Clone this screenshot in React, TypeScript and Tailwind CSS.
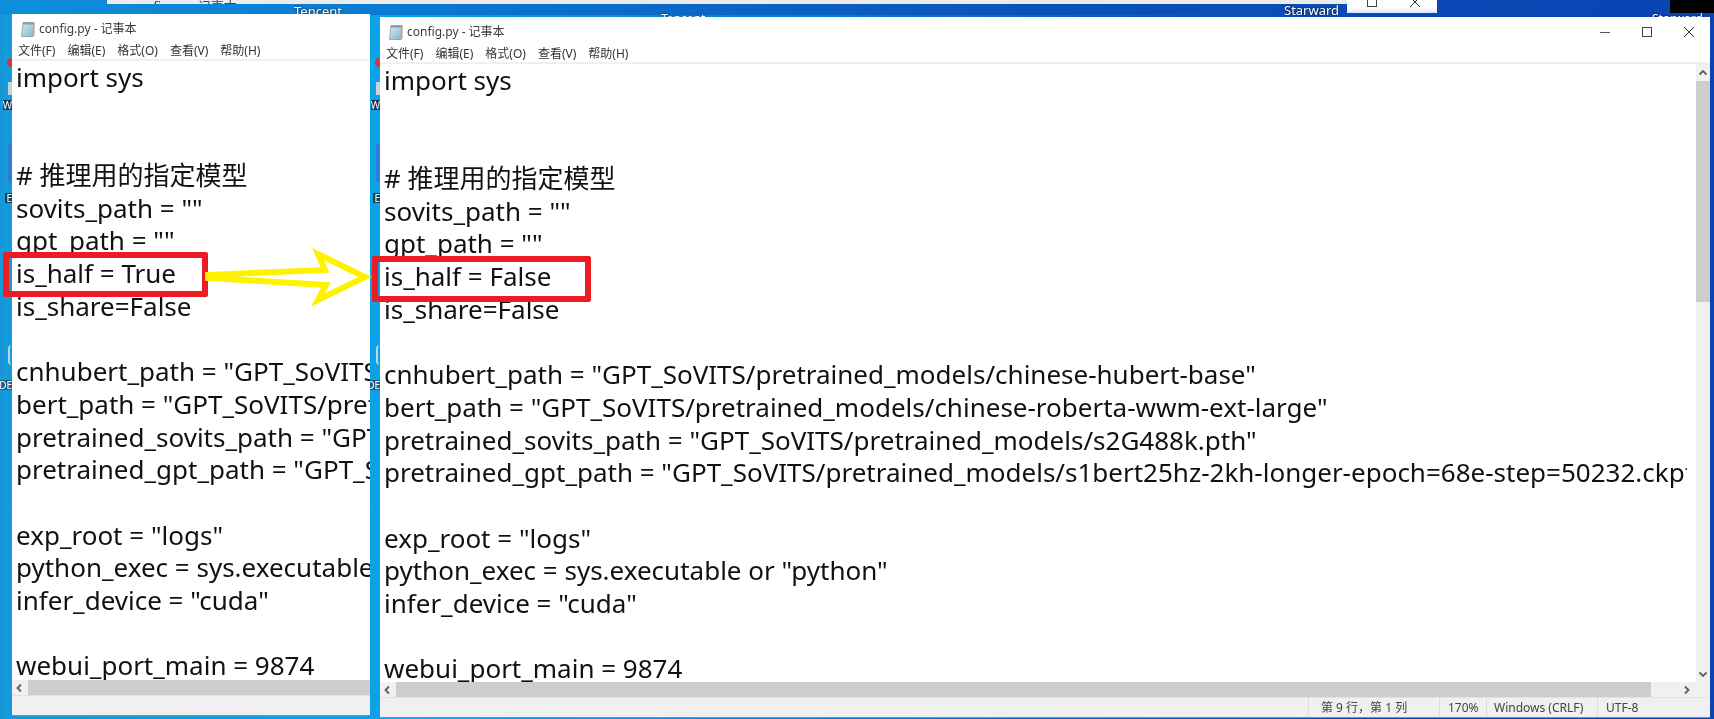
import React from "react";

const LINES = [
  "import sys",
  "",
  "",
  "# 推理用的指定模型",
  'sovits_path = ""',
  'gpt_path = ""',
  "",
  "is_share=False",
  "",
  'cnhubert_path = "GPT_SoVITS/pretrained_models/chinese-hubert-base"',
  'bert_path = "GPT_SoVITS/pretrained_models/chinese-roberta-wwm-ext-large"',
  'pretrained_sovits_path = "GPT_SoVITS/pretrained_models/s2G488k.pth"',
  'pretrained_gpt_path = "GPT_SoVITS/pretrained_models/s1bert25hz-2kh-longer-epoch=68e-step=50232.ckpt"',
  "",
  'exp_root = "logs"',
  'python_exec = sys.executable or "python"',
  'infer_device = "cuda"',
  "",
  "webui_port_main = 9874",
];

function Chevron({ dir }: { dir: "left" | "right" | "up" | "down" }) {
  const d = {
    left: "M6 1.5 L2.5 5 L6 8.5",
    right: "M4 1.5 L7.5 5 L4 8.5",
    up: "M1.5 6.5 L5 3 L8.5 6.5",
    down: "M1.5 3.5 L5 7 L8.5 3.5",
  }[dir];
  return (
    <svg width="10" height="10" viewBox="0 0 10 10" fill="none">
      <path d={d} stroke="#5f5f5f" strokeWidth="1.8" />
    </svg>
  );
}

function NotepadIcon() {
  return (
    <svg width="16" height="17" viewBox="0 0 16 17">
      <defs>
        <linearGradient id="np" x1="0" y1="0" x2="1" y2="1">
          <stop offset="0" stopColor="#d8eef4" />
          <stop offset="1" stopColor="#7fb6c8" />
        </linearGradient>
      </defs>
      <path d="M3 1.5 H14 L13 15.5 H1.5 Z" fill="url(#np)" stroke="#8c9a9c" strokeWidth="0.8" />
      <path d="M3 1.5 H14 L13.8 3.5 H2.8 Z" fill="#8f9b9e" />
      <path d="M14.2 2 V15 H13" fill="none" stroke="#c7a86a" strokeWidth="0.8" />
    </svg>
  );
}

function Notepad({
  className,
  full,
  half,
}: {
  className: string;
  full?: boolean;
  half: string;
}) {
  return (
    <div className={`absolute flex flex-col bg-white ${className}`}>
      <div className="flex h-[28px] items-center pl-[8px] pt-[2px]">
        <NotepadIcon />
        <span className="ml-[3px] text-[12px] text-[#3c3c3c]">config.py - 记事本</span>
        {full && (
          <div className="ml-auto flex items-center gap-[32px] pr-[16px]">
            <span className="h-[1px] w-[10px] bg-[#555]" />
            <span className="h-[10px] w-[10px] border border-[#444]" />
            <svg width="10" height="10" viewBox="0 0 10 10">
              <path d="M0 0 L10 10 M10 0 L0 10" stroke="#333" strokeWidth="1" />
            </svg>
          </div>
        )}
      </div>
      <div className="flex h-[19px] items-center gap-[12px] border-b-2 border-[#f0f0f0] pl-[6px] text-[12px] text-[#333]">
        <span>文件(F)</span>
        <span>编辑(E)</span>
        <span>格式(O)</span>
        <span>查看(V)</span>
        <span>帮助(H)</span>
      </div>
      <div className="flex min-h-0 flex-1">
        <div className={`min-w-0 flex-1 pl-[4px] ${full ? "pr-[9px]" : ""}`}>
          <div className="h-full overflow-hidden font-['Noto_Sans','Noto_Sans_CJK_SC',sans-serif] text-[26px] leading-[32.7px] whitespace-pre text-[#111]">
            {LINES.map((l, i) => (
              <div key={i} className="h-[32.7px]">
                {i === 6 ? half : l}
              </div>
            ))}
          </div>
        </div>
        {full && (
          <div className="flex w-[14px] flex-col bg-[#f0f0f0]">
            <div className="flex h-[17px] items-center justify-center">
              <Chevron dir="up" />
            </div>
            <div className="h-[221px] bg-[#cdcdcd]" />
            <div className="flex-1" />
            <div className="flex h-[17px] items-center justify-center">
              <Chevron dir="down" />
            </div>
          </div>
        )}
      </div>
      <div className="flex h-[15px] shrink-0 bg-[#f0f0f0]">
        <div className="flex w-[16px] items-center justify-center">
          <Chevron dir="left" />
        </div>
        <div className={full ? "w-[1255px] bg-[#cdcdcd]" : "flex-1 bg-[#cdcdcd]"} />
        {full && (
          <div className="flex flex-1 items-center justify-end pr-[19px]">
            <Chevron dir="right" />
          </div>
        )}
      </div>
      <div className="flex h-[20px] shrink-0 items-center border-t border-[#e2e2e2] bg-[#f0f0f0] text-[12px] text-[#444]">
        {full && (
          <div className="ml-auto flex h-full font-['Noto_Sans','Noto_Sans_CJK_SC',sans-serif]">
            <div className="flex w-[131px] items-center border-l border-[#dcdcdc] pl-[12px]">第 9 行，第 1 列</div>
            <div className="flex w-[47px] items-center border-l border-[#dcdcdc] pl-[8px]">170%</div>
            <div className="flex w-[111px] items-center border-l border-[#dcdcdc] pl-[7px]">Windows (CRLF)</div>
            <div className="flex w-[113px] items-center border-l border-[#dcdcdc] pl-[8px]">UTF-8</div>
          </div>
        )}
      </div>
    </div>
  );
}

function DesktopBits({ className }: { className: string }) {
  return (
    <div className={`absolute top-0 h-[719px] overflow-hidden text-[10px] leading-none ${className}`}>
      <span className="absolute top-[58px] right-0 h-[9px] w-[5px] rounded-l-full bg-[#d8343c]" />
      <span className="absolute top-[82px] right-0 h-[13px] w-[4px] bg-[#c9d3d8]" />
      <span className="absolute top-[100px] right-0 bg-[#143a55] text-white">W</span>
      <span className="absolute top-[143px] right-0 h-[40px] w-[4px] rounded-l bg-[#2b7fd0]" />
      <span className="absolute top-[193px] right-0 bg-[#14405c] pl-[1px] text-white">E</span>
      <span className="absolute top-[345px] right-0 h-[20px] w-[4px] rounded-l-full border-l-2 border-[#b9d7e6]" />
      <span className="absolute top-[380px] right-0 bg-[#1b5f85] text-white">DE</span>
    </div>
  );
}

export default function App() {
  return (
    <div className="relative h-[719px] w-[1714px] overflow-hidden bg-[linear-gradient(90deg,#1a93d6_0px,#139bdb_4px,#0ba2e8_380px,#0a44b2_1400px)] font-['Noto_Sans','Noto_Sans_CJK_SC',sans-serif] blur-[0.35px]">
      {/* top desktop strip */}
      <div className="absolute inset-x-0 top-0 h-[15px] bg-[linear-gradient(90deg,#0d90da_0%,#0a78d2_25%,#0a52ba_60%,#0a44b2_100%)]" />
      <div className="absolute inset-y-0 right-0 w-[4px] bg-[#0a44b2]" />

      {/* window peeking out along the top */}
      <div className="absolute top-0 left-[107px] flex h-[4px] w-[1240px] items-end overflow-hidden bg-[#ebebeb]">
        <span className="ml-[24px] mb-[-9px] text-[13px] leading-none text-[#444]">config.py - 记事本</span>
      </div>
      <div className="absolute top-0 left-[1347px] flex h-[13px] w-[90px] items-start justify-end gap-[33px] bg-[linear-gradient(180deg,#ffffff_50%,#dbe9fb_100%)] pr-[17px]">
        <span className="mt-[-4px] h-[11px] w-[10px] border border-[#444]" />
        <svg width="10" height="10" viewBox="0 0 10 10" className="mt-[-3px]">
          <path d="M0 0 L10 10 M10 0 L0 10" stroke="#333" strokeWidth="1" />
        </svg>
      </div>
      <div className="absolute top-0 left-[1670px] h-[13px] w-[44px] bg-black" />

      {/* desktop labels */}
      <span className="absolute top-[2px] left-[294px] text-[13px] text-white [text-shadow:0_0_2px_#000]">Tencent</span>
      <span className="absolute top-[10px] left-[661px] text-[12px] text-white [text-shadow:0_0_2px_#000]">Tencent</span>
      <span className="absolute top-[1px] left-[1284px] text-[13px] text-white [text-shadow:0_0_2px_#000]">Starward</span>
      <span className="absolute top-[10px] left-[1652px] text-[12px] text-white [text-shadow:0_0_2px_#000]">Starward</span>

      <DesktopBits className="left-0 w-[12px]" />
      <DesktopBits className="left-[370px] w-[10px]" />

      <Notepad className="top-[14px] left-[12px] h-[701px] w-[358px] shadow-[0_1px_0_#8a8a8a]" half="is_half = True" />
      <Notepad className="top-[17px] left-[380px] h-[700px] w-[1330px] shadow-[0_1px_0_#8a8a8a]" half="is_half = False" full />

      {/* annotations */}
      <div className="absolute top-[252px] left-[3px] h-[45px] w-[205px] rounded-[2px] border-[6px] border-[#ed1c24]" />
      <div className="absolute top-[256px] left-[372px] h-[46px] w-[219px] rounded-[2px] border-[6px] border-[#ed1c24]" />
      <svg className="absolute top-[245px] left-[205px]" width="170" height="65" viewBox="0 0 170 65" fill="none">
        <path
          d="M3 30 L120 25 L113 9 L160 32 L113 55 L121 40 L3 33 Z"
          stroke="#fff200"
          strokeWidth="6"
          strokeLinejoin="miter"
          fill="#ffffff"
        />
      </svg>
    </div>
  );
}
